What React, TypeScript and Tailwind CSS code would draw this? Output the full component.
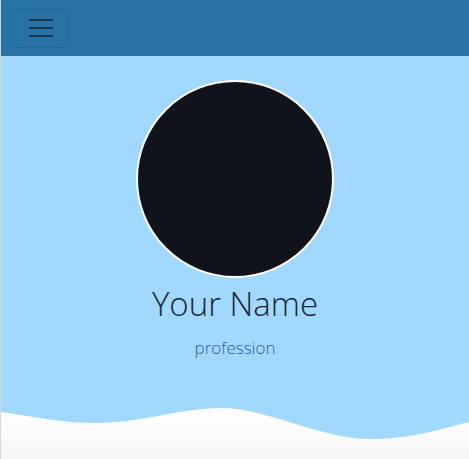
import React from "react";

const Wave = () => (
  <svg
    className="block w-full h-[51px]"
    viewBox="0 0 468 51"
    preserveAspectRatio="none"
  >
    <defs>
      <linearGradient id="waveFill" x1="0" y1="0" x2="0" y2="1">
        <stop offset="0%" stopColor="#ffffff" />
        <stop offset="100%" stopColor="#f6f6f6" />
      </linearGradient>
    </defs>
    <path
      d="M0 4 C 40 10, 65 15, 95 15 C 140 15, 180 0, 220 0 C 265 0, 320 31, 370 31 C 410 31, 440 21, 468 14 V 51 H 0 Z"
      fill="url(#waveFill)"
    />
  </svg>
);

const App = () => {
  return (
    <div
      className="w-full h-[459px] flex flex-col border-l border-[#d6d6d6] overflow-hidden"
      style={{ fontFamily: "'Open Sans', 'Noto Sans', sans-serif" }}
    >
      {/* Navbar */}
      <nav className="h-14 bg-[#2872a4] flex items-center px-3 shrink-0">
        <button className="w-[55px] h-[39px] rounded-md border border-[#22679a] flex flex-col items-center justify-center gap-[6px]">
          <span className="block w-6 h-[2px] bg-[#173652]" />
          <span className="block w-6 h-[2px] bg-[#173652]" />
          <span className="block w-6 h-[2px] bg-[#173652]" />
        </button>
      </nav>

      {/* Hero */}
      <section className="flex-1 bg-[#a1d9fe] flex flex-col">
        <div className="flex flex-col items-center pt-6 flex-1">
          <div className="w-[198px] h-[198px] rounded-full bg-[#10131b] border-2 border-white" />
          <h1 className="text-[33px] leading-[44px] font-light text-[#1c2733] mt-[4px]">
            Your Name
          </h1>
          <p className="text-[17px] leading-6 font-light text-[#2f5c94] mt-[10px]">
            profession
          </p>
        </div>
        <Wave />
      </section>
    </div>
  );
};

export default App;
